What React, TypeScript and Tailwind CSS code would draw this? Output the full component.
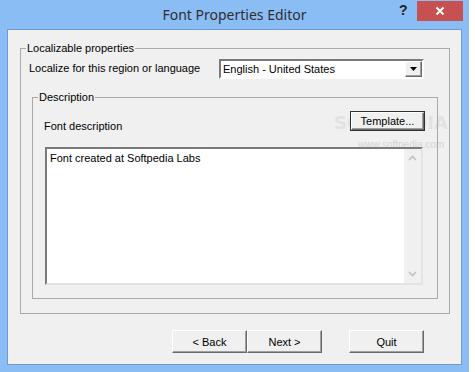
import React from "react";

const raised =
  "border border-t-white border-l-white border-b-[#696969] border-r-[#696969] shadow-[inset_-1px_-1px_0_#a0a0a0] bg-[#f0f0f0]";

const Btn = ({ label, className = "" }: { label: string; className?: string }) => (
  <div className={`w-[75px] h-[23px] flex items-center justify-center ${raised} ${className}`}>
    {label}
  </div>
);

const App = () => {
  return (
    <div className="w-[475px] h-[372px] bg-white font-['Liberation_Sans',sans-serif] text-[11px] leading-[14px] text-black">
      <div className="w-[469px] h-[372px] bg-[#8bbdf5] flex flex-col">
        {/* title bar */}
        <div className="h-[29px] relative flex items-center justify-center">
          <span className="font-['Noto_Sans',sans-serif] text-[14px] text-[#2e2e2e] mt-px">
            Font Properties Editor
          </span>
          <span className="absolute left-[399px] top-[3px] text-[14px] font-bold text-[#222]">?</span>
          <div className="absolute left-[417px] top-px w-[46px] h-[20px] bg-[#c75050] flex items-center justify-center">
            <svg width="10" height="10" viewBox="0 0 10 10">
              <path d="M1.5 1.5 L8.5 8.5 M8.5 1.5 L1.5 8.5" stroke="white" strokeWidth="2" />
            </svg>
          </div>
        </div>

        {/* client area */}
        <div className="ml-[7px] w-[455px] h-[336px] border border-[#6f9ad4] bg-[#f0f0f0] flex flex-col relative">
          {/* watermark, painted under the controls */}
          <div className="absolute left-[326px] top-[82px] font-['DejaVu_Sans',sans-serif] text-[18px] leading-[22px] font-bold text-[#e2e2e2]">
            SOFTPEDIA
          </div>
          <div className="absolute left-[350px] top-[109px] text-[10px] leading-[12px] text-[#d4d4d4]">
            www.softpedia.com
          </div>

          <fieldset className="relative ml-[12px] mt-[11px] w-[430px] h-[273px] border border-[#a9a9a9] flex flex-col">
            <legend className="ml-[5px] px-[1px]">Localizable properties</legend>
            <div className="mt-[4px] flex items-center">
              <span className="ml-[8px] mt-[-2px]">Localize for this region or language</span>
              <div className="ml-auto mr-[25px] w-[205px] h-[20px] bg-white border-2 border-t-[#7a7a7a] border-l-[#7a7a7a] border-b-white border-r-white flex items-center">
                <span className="ml-[2px] flex-1">English - United States</span>
                <div className={`w-[17px] h-[16px] flex items-center justify-center ${raised}`}>
                  <svg width="7" height="4" viewBox="0 0 7 4">
                    <path d="M0 0 H7 L3.5 4 Z" fill="black" />
                  </svg>
                </div>
              </div>
            </div>

            <fieldset className="ml-[11px] mt-[11px] w-[406px] h-[209px] border border-[#a9a9a9] flex flex-col">
              <legend className="ml-[5px] px-[1px]">Description</legend>
              <div className="flex items-start">
                <span className="ml-[11px] mt-[15px]">Font description</span>
                <div className="ml-auto mr-[12px] mt-[7px] w-[75px] h-[20px] border border-[#303030] flex">
                  <div className={`flex-1 flex items-center justify-center ${raised}`}>Template...</div>
                </div>
              </div>
              <div className="ml-[12px] mt-[14px] w-[378px] h-[138px] bg-white border-2 border-t-[#7a7a7a] border-l-[#7a7a7a] border-b-[#e3e3e3] border-r-[#e3e3e3] flex">
                <div className="flex-1 pl-[3px] pt-[2px]">Font created at Softpedia Labs</div>
                <div className="w-[17px] bg-[#f0f0f0] flex flex-col items-center justify-between py-[6px]">
                  <svg width="9" height="6" viewBox="0 0 9 6">
                    <path d="M1 5 L4.5 1.5 L8 5" stroke="#c2c2c2" strokeWidth="1.6" fill="none" />
                  </svg>
                  <svg width="9" height="6" viewBox="0 0 9 6">
                    <path d="M1 1 L4.5 4.5 L8 1" stroke="#c2c2c2" strokeWidth="1.6" fill="none" />
                  </svg>
                </div>
              </div>
            </fieldset>
          </fieldset>

          <div className="ml-[164px] mt-[16px] flex">
            <Btn label="< Back" />
            <Btn label="Next >" />
            <Btn label="Quit" className="ml-[27px]" />
          </div>
        </div>
      </div>
    </div>
  );
};

export default App;
